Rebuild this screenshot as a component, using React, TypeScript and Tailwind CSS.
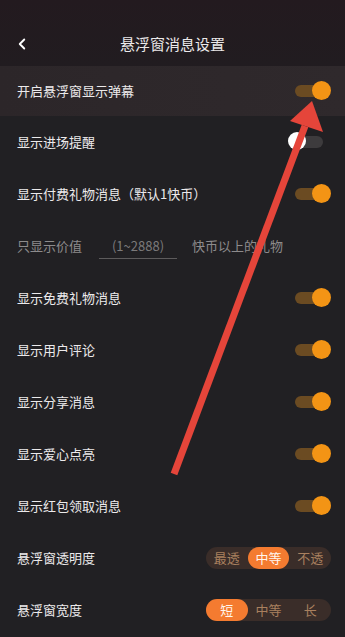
import { ChevronLeft } from 'lucide-react';

type Row =
  | { kind: 'toggle'; label: string; on: boolean }
  | { kind: 'value' }
  | { kind: 'segment'; label: string; options: string[]; active: number };

const rows: Row[] = [
  { kind: 'toggle', label: '显示进场提醒', on: false },
  { kind: 'toggle', label: '显示付费礼物消息（默认1快币）', on: true },
  { kind: 'value' },
  { kind: 'toggle', label: '显示免费礼物消息', on: true },
  { kind: 'toggle', label: '显示用户评论', on: true },
  { kind: 'toggle', label: '显示分享消息', on: true },
  { kind: 'toggle', label: '显示爱心点亮', on: true },
  { kind: 'toggle', label: '显示红包领取消息', on: true },
  { kind: 'segment', label: '悬浮窗透明度', options: ['最透', '中等', '不透'], active: 1 },
  { kind: 'segment', label: '悬浮窗宽度', options: ['短', '中等', '长'], active: 0 },
];

function Toggle({ on }: { on: boolean }) {
  if (!on) {
    return (
      <div className="relative mr-[8px] flex h-[20px] w-[35px] items-center">
        <div className="ml-[9px] h-[12px] w-[26px] rounded-full bg-[#3d3b3d]" />
        <div className="absolute left-0 top-0 h-[18px] w-[18px] rounded-full bg-white" />
      </div>
    );
  }
  return (
    <div className="relative flex h-[20px] w-[36px] items-center">
      <div className="h-[12px] w-[32px] rounded-full bg-[#6b4b22]" />
      <div className="absolute right-0 top-0 h-[19px] w-[19px] rounded-full bg-[#f39415]" />
    </div>
  );
}

function Segment({ options, active }: { options: string[]; active: number }) {
  return (
    <div className="flex h-[22px] w-[125px] rounded-full bg-[#3a2d29]">
      {options.map((o, i) => (
        <div
          key={o}
          className={
            i === active
              ? 'flex flex-1 items-center justify-center rounded-full bg-[#f47b30] text-[13px] text-[#fff6ee]'
              : 'flex flex-1 items-center justify-center text-[13px] text-[#a9805f]'
          }
        >
          {o}
        </div>
      ))}
    </div>
  );
}

export default function App() {
  return (
    <div
      className="relative h-[637px] w-[345px] overflow-hidden bg-[#212023] text-[13px] text-[#eceaeb]"
      style={{ fontFamily: '"Noto Sans CJK SC", "Noto Sans", sans-serif' }}
    >
      <header className="relative flex h-[66px] items-center justify-center bg-gradient-to-b from-[#231a1f] to-[#211c20] pt-[22px]">
        <ChevronLeft className="absolute left-[13px] top-[35px] text-white" size={18} strokeWidth={2.5} />
        <h1 className="text-[15px] text-[#ebe9ea]">悬浮窗消息设置</h1>
      </header>

      <div className="flex h-[50px] items-center justify-between bg-gradient-to-r from-[#2c2629] to-[#2f292c] pl-[17px] pr-[14px]">
        <span>开启悬浮窗显示弹幕</span>
        <Toggle on />
      </div>

      {rows.map((r, i) => {
        if (r.kind === 'value') {
          return (
            <div key={i} className="flex h-[52px] items-center pl-[17px] text-[#8d8b8c]">
              <span>只显示价值</span>
              <div className="ml-[17px] flex h-[26px] w-[78px] items-center justify-center border-b border-[#5d5b5c] text-[#7c7a7b]">
                (1~2888)
              </div>
              <span className="ml-[15px]">快币以上的礼物</span>
            </div>
          );
        }
        return (
          <div key={i} className="flex h-[52px] items-center justify-between pl-[17px] pr-[14px]">
            <span>{r.label}</span>
            {r.kind === 'toggle' ? <Toggle on={r.on} /> : <Segment options={r.options} active={r.active} />}
          </div>
        );
      })}

      <svg className="pointer-events-none absolute left-0 top-0" width="345" height="637" viewBox="0 0 345 637">
        <line x1="174" y1="474" x2="305" y2="126" stroke="#e5453a" strokeWidth="7" />
        <polygon points="312,101 290,121 323,132" fill="#e5453a" />
      </svg>
    </div>
  );
}
